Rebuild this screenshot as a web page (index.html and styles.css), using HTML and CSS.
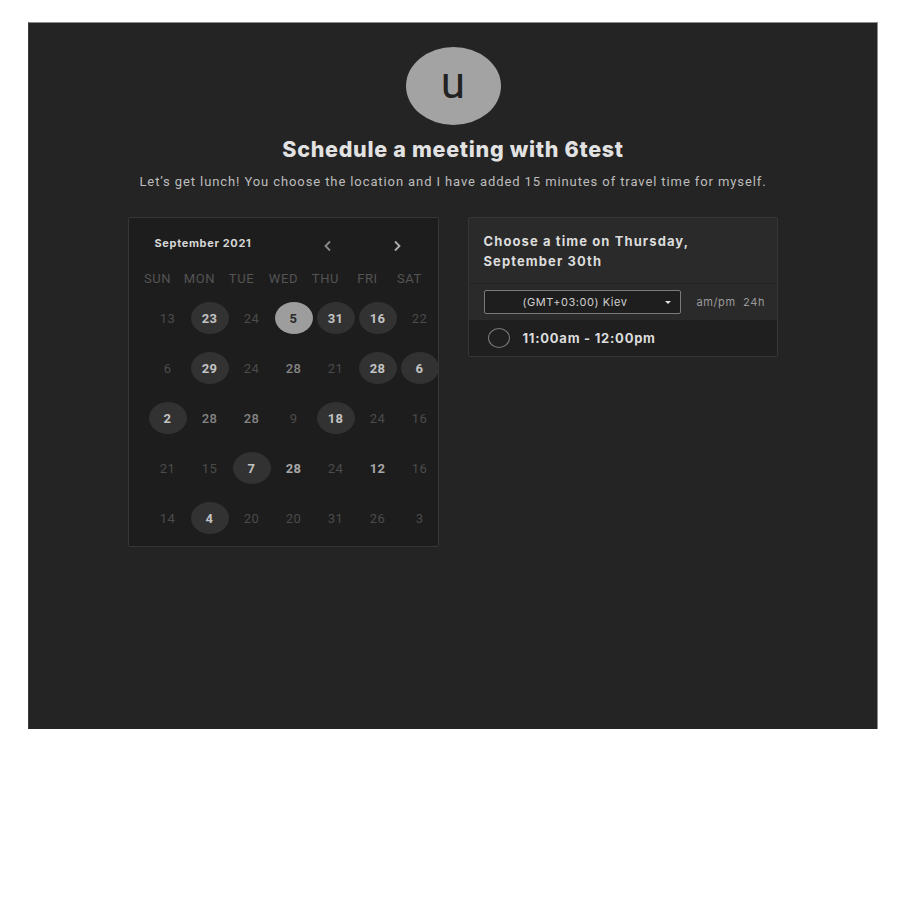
FILE: index.html
```html
<!DOCTYPE html>
<html>
<head>
<meta charset="utf-8">
<link rel="stylesheet" href="styles.css">
</head>
<body>
<div class="page">
  <div class="avatar">u</div>
  <h1 class="title">Schedule a meeting with 6test</h1>
  <p class="subtitle">Let’s get lunch! You choose the location and I have added 15 minutes of travel time for myself.</p>
  <div class="cards">
    <div class="calendar">
      <div class="cal-head">
        <span class="month">September 2021</span>
        <span class="arrow prev"><svg width="9" height="12" viewBox="0 0 9 12"><path d="M7 1.5 L2.5 6 L7 10.5" fill="none" stroke="#8a8a8a" stroke-width="1.8"/></svg></span>
        <span class="arrow next"><svg width="9" height="12" viewBox="0 0 9 12"><path d="M2 1.5 L6.5 6 L2 10.5" fill="none" stroke="#b0b0b0" stroke-width="1.8"/></svg></span>
      </div>
      <div class="weekdays">
        <span>SUN</span><span>MON</span><span>TUE</span><span>WED</span><span>THU</span><span>FRI</span><span>SAT</span>
      </div>
      <div class="days">
        <span class="day">13</span><span class="day avail">23</span><span class="day">24</span><span class="day sel">5</span><span class="day avail">31</span><span class="day avail">16</span><span class="day">22</span>
        <span class="day">6</span><span class="day avail">29</span><span class="day">24</span><span class="day mid">28</span><span class="day">21</span><span class="day avail">28</span><span class="day avail">6</span>
        <span class="day avail">2</span><span class="day mid">28</span><span class="day mid">28</span><span class="day">9</span><span class="day avail">18</span><span class="day">24</span><span class="day">16</span>
        <span class="day">21</span><span class="day">15</span><span class="day avail">7</span><span class="day bright">28</span><span class="day">24</span><span class="day bright">12</span><span class="day">16</span>
        <span class="day">14</span><span class="day avail">4</span><span class="day">20</span><span class="day">20</span><span class="day">31</span><span class="day">26</span><span class="day">3</span>
      </div>
    </div>
    <div class="times">
      <div class="times-head">Choose a time on Thursday,<br>September 30th</div>
      <div class="tz-row">
        <div class="tz-select"><span class="tz-label">(GMT+03:00) Kiev</span><span class="caret"></span></div>
        <div class="fmt">am/pm&nbsp;&nbsp;24h</div>
      </div>
      <div class="slot">
        <span class="radio"></span>
        <span class="slot-text">11:00am - 12:00pm</span>
      </div>
    </div>
  </div>
</div>
</body>
</html>
```

FILE: styles.css
```css
* { box-sizing: border-box; }
html, body { margin: 0; padding: 0; background: #ffffff; }
body { font-family: Roboto, "Liberation Sans", sans-serif; }

.page {
  margin: 22px 0 0 28px;
  width: 850px;
  height: 707px;
  background: #242424;
  border-top: 1px solid #8c8c8c;
  border-right: 1px solid #8c8c8c;
  border-left: 1px solid #3a3a3a;
  display: flex;
  flex-direction: column;
  align-items: center;
  padding-top: 24px;
}

.avatar {
  width: 95px;
  height: 78px;
  border-radius: 50%;
  background: #a3a3a3;
  color: #222222;
  font-family: Roboto, sans-serif;
  font-size: 44px;
  line-height: 72px;
  text-align: center;
}

.title {
  margin: 12px 0 0;
  font-family: Inter, "Liberation Sans", sans-serif;
  font-weight: 800;
  font-size: 21.5px;
  letter-spacing: 0.7px;
  line-height: 24px;
  color: #e2e2e2;
}

.subtitle {
  margin: 13px 0 0;
  font-size: 13px;
  letter-spacing: 0.9px;
  line-height: 16px;
  color: #bdbdbd;
}

.cards {
  margin-top: 27px;
  display: flex;
  gap: 29px;
  align-items: flex-start;
  padding-right: 1px;
}

.calendar {
  width: 311px;
  background: #1d1d1d;
  border: 1px solid #363636;
  border-radius: 2px;
  padding-bottom: 3px;
}

.cal-head {
  display: flex;
  align-items: center;
  padding: 16px 0 0 26px;
  height: 34px;
}
.month {
  width: 154px;
  font-family: Inter, "Liberation Sans", sans-serif;
  font-weight: 700;
  font-size: 11px;
  letter-spacing: 0.65px;
  line-height: 18px;
  color: #d6d6d6;
}
.arrow { display: flex; justify-content: center; width: 38px; padding-top: 5px; }
.arrow.next { margin-left: 32px; }

.weekdays {
  margin-top: 17px;
  padding-left: 8px;
  display: grid;
  grid-template-columns: repeat(7, 42px);
  height: 20px;
}
.weekdays span {
  text-align: center;
  font-size: 13px;
  letter-spacing: 0.6px;
  line-height: 20px;
  color: #545454;
}

.days {
  margin-top: 4px;
  padding-left: 18px;
  display: grid;
  grid-template-columns: repeat(7, 42px);
  grid-auto-rows: 50px;
  width: 312px;
}
.day {
  display: flex;
  align-items: center;
  justify-content: center;
  justify-self: center;
  align-self: center;
  width: 38px;
  height: 32px;
  border-radius: 50%;
  font-size: 13px;
  letter-spacing: 0.4px;
  color: #4b4b4b;
}
.day.mid { color: #858585; font-weight: 500; }
.day.bright { color: #a6a6a6; font-weight: 700; }
.day.avail { background: #323232; color: #c2c2c2; font-weight: 700; }
.day.sel { background: #9d9d9d; color: #2a2a2a; font-weight: 700; }

.times {
  width: 310px;
  border: 1px solid #363636;
  border-radius: 2px;
  background: #2a2a2a;
}
.times-head {
  padding: 13px 15px 12px;
  font-family: Inter, "Liberation Sans", sans-serif;
  font-weight: 700;
  font-size: 13px;
  letter-spacing: 1.1px;
  line-height: 20px;
  color: #dcdcdc;
  border-bottom: 1px solid #232323;
}
.tz-row {
  display: flex;
  align-items: center;
  height: 36px;
  padding: 0 0 0 15px;
  background: #2a2a2a;
}
.tz-select {
  width: 197px;
  height: 24px;
  border: 1px solid #7a7a7a;
  border-radius: 2px;
  background: #1e1e1e;
  display: flex;
  align-items: center;
  padding-left: 38px;
}
.tz-label {
  font-family: Inter, "Liberation Sans", sans-serif;
  font-size: 11px;
  letter-spacing: 0.55px;
  color: #cfcfcf;
  width: 142px;
}
.caret {
  width: 0;
  height: 0;
  border-left: 3.5px solid transparent;
  border-right: 3.5px solid transparent;
  border-top: 3.5px solid #e0e0e0;
}
.fmt {
  margin-left: 16px;
  font-family: Inter, "Liberation Sans", sans-serif;
  font-size: 11px;
  letter-spacing: 0.6px;
  color: #9a9a9a;
}
.slot {
  display: flex;
  align-items: center;
  height: 36px;
  background: #1f1f1f;
  padding-left: 19px;
}
.radio {
  width: 22px;
  height: 20px;
  border-radius: 50%;
  border: 1.5px solid #7a7a7a;
}
.slot-text {
  margin-left: 13px;
  font-family: Inter, "Liberation Sans", sans-serif;
  font-weight: 700;
  font-size: 13px;
  letter-spacing: 0.75px;
  color: #dcdcdc;
}
```
